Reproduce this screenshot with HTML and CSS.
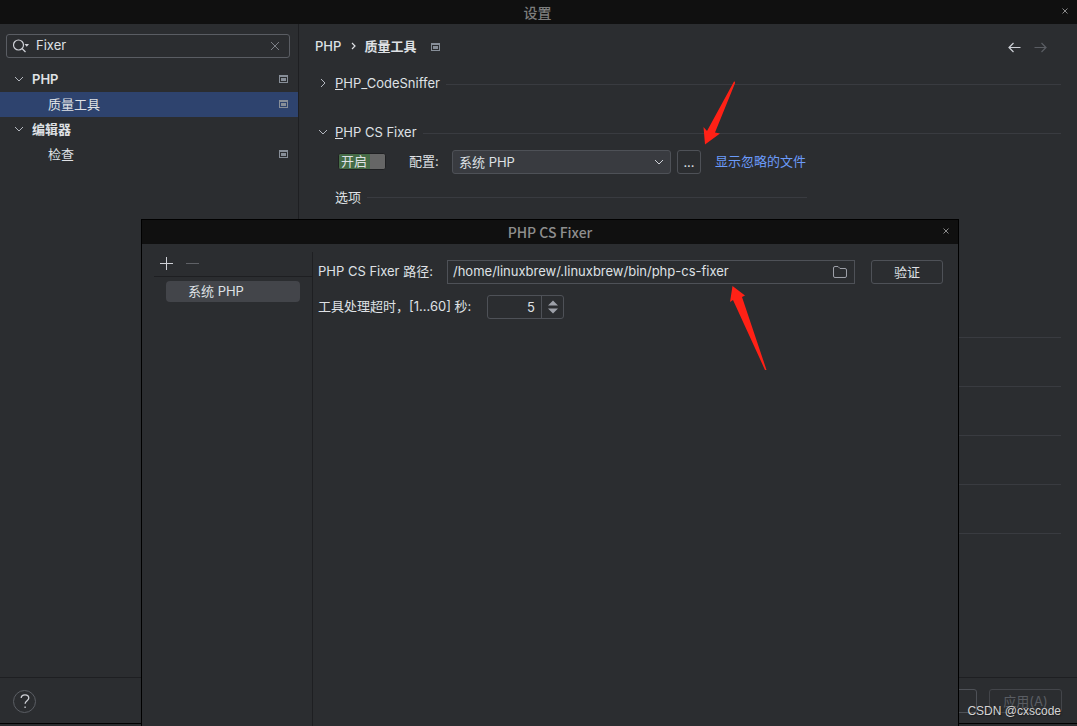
FILE: index.html
```html
<!DOCTYPE html>
<html lang="zh-CN">
<head>
<meta charset="utf-8">
<title>设置</title>
<link rel="stylesheet" href="styles.css">
</head>
<body>
<svg class="defs" aria-hidden="true">
  <symbol id="down" viewBox="0 0 10 10"><path d="M1 3l4 4 4-4" fill="none" stroke="currentColor"/></symbol>
  <symbol id="right" viewBox="0 0 10 10"><path d="M3 1l4 4-4 4" fill="none" stroke="currentColor"/></symbol>
  <symbol id="project" viewBox="0 0 9 8"><path fill-rule="evenodd" d="M0 0h9v8H0zM1 2v5h7V2z" fill="#878e98"/><path d="M2 3h5v3H2z" fill="#878e98"/></symbol>
  <symbol id="close" viewBox="0 0 6 6"><path d="M.5.5l5 5M5.500.5l-5 5" fill="none" stroke="currentColor"/></symbol>
</svg>
<div class="window">
  <header class="titlebar"><h1 class="title">设置</h1><button class="close" aria-label="关闭"><svg width="6" height="6"><use href="#close"/></svg></button></header>
  <div class="body">
    <aside class="sidebar">
      <div class="search">
        <svg width="18" height="16" viewBox="0 0 18 16" fill="none" stroke="#ced0d6" stroke-width="1.200"><circle cx="5.500" cy="7" r="5"/><path d="M9 10.500l3.500 3.500"/><path d="M11.500 6h4.500l-2.250 2.750z" fill="#ced0d6" stroke="none"/></svg>
        <input class="search-input" type="text" value="Fixer" aria-label="搜索">
        <button class="plain dim" aria-label="清除"><svg width="8" height="8" viewBox="0 0 8 8"><path d="M0 0l8 8M8 0L0 8" stroke="currentColor"/></svg></button>
      </div>
      <nav class="tree">
        <a class="row group" href="#php"><svg class="arrow"><use href="#down"/></svg><span>PHP</span><svg class="project"><use href="#project"/></svg></a>
        <a class="row child selected" href="#quality"><span>质量工具</span><svg class="project"><use href="#project"/></svg></a>
        <a class="row group" href="#editor"><svg class="arrow"><use href="#down"/></svg><span>编辑器</span></a>
        <a class="row child" href="#inspections"><span>检查</span><svg class="project"><use href="#project"/></svg></a>
      </nav>
    </aside>
    <main class="main">
      <div class="crumbs">
        <span class="crumb">PHP</span>
        <svg width="5" height="8" viewBox="0 0 5 8"><path d="M1 1l3 3-3 3" fill="none" stroke="#dfe1e5" stroke-width="1.200"/></svg>
        <strong class="crumb-current">质量工具</strong>
        <svg class="project"><use href="#project"/></svg>
        <div class="history">
          <button class="plain" aria-label="后退"><svg width="13" height="11" viewBox="0 0 13 11" fill="none" stroke="#ced0d6" stroke-width="1.200"><path d="M12.500 5.500H1M5.500 1L1 5.500 5.500 10"/></svg></button>
          <button class="plain" aria-label="前进" disabled><svg width="13" height="11" viewBox="0 0 13 11" fill="none" stroke="#5a5d63" stroke-width="1.200"><path d="M.5 5.500H12M7.500 1L12 5.500 7.500 10"/></svg></button>
        </div>
      </div>
      <h2 class="section"><svg class="arrow"><use href="#right"/></svg><span><u class="key">P</u>HP_CodeSniffer</span><i class="rule"></i></h2>
      <h2 class="section"><svg class="arrow"><use href="#down"/></svg><span><u class="key">P</u>HP CS Fixer</span><i class="rule"></i></h2>
      <div class="config">
        <button class="switch" role="switch" aria-checked="true"><span class="on">开启</span><span class="knob"></span></button>
        <label class="config-label" for="config">配置:</label>
        <div class="select-box"><select class="select" id="config"><option>系统 PHP</option></select><svg class="select-arrow"><use href="#down"/></svg></div>
        <button class="button more">...</button>
        <a class="link" href="#ignored">显示忽略的文件</a>
      </div>
      <h3 class="options">选项<i class="rule"></i></h3>
      <div class="more-sections"><i class="rule"></i><i class="rule"></i><i class="rule"></i><i class="rule"></i><i class="rule"></i></div>
    </main>
  </div>
  <footer class="footer">
    <button class="help" aria-label="帮助"><svg width="10" height="15" viewBox="0 0 10 15" fill="none" stroke="#ced0d6" stroke-width="1.300"><path d="M1.200 4C1.200 2 2.800 .8 5 .8s3.800 1.200 3.800 3.200c0 2.600-3.700 2.800-3.700 5.800"/><path d="M5.100 12.500v1.500"/></svg></button>
    <button class="button footer-button" aria-label="取消"></button>
    <button class="button footer-button disabled" disabled>应用(A)</button>
  </footer>
</div>

<section class="dialog" role="dialog" aria-labelledby="dialog-title">
  <header class="titlebar"><h2 class="title latin" id="dialog-title">PHP CS Fixer</h2><button class="close" aria-label="关闭"><svg width="6" height="6"><use href="#close"/></svg></button></header>
  <div class="dialog-body">
    <div class="list">
      <div class="tools">
        <button class="plain" aria-label="添加"><svg width="13" height="13" viewBox="0 0 13 13"><path d="M0 6.500h13M6.500 0v13" stroke="#ced0d6"/></svg></button>
        <button class="plain" aria-label="移除" disabled><svg width="13" height="13" viewBox="0 0 13 13"><path d="M0 6.500h13" stroke="#5f6166"/></svg></button>
      </div>
      <button class="list-item">系统 PHP</button>
    </div>
    <form class="form">
      <div class="field">
        <label class="path-label" for="path">PHP CS Fixer 路径:</label>
        <div class="path-box"><input class="path" id="path" type="text" value="/home/linuxbrew/.linuxbrew/bin/php-cs-fixer"><button class="plain" type="button" aria-label="浏览"><svg width="14" height="12" viewBox="0 0 14 12"><path d="M.5 10V2Q.5.5 2 .5h3l2 2h5q1.500 0 1.500 1.500v6q0 1.500-1.500 1.500H2Q.5 11.500.5 10z" fill="none" stroke="#9da0a8"/></svg></button></div>
        <button class="button verify" type="button">验证</button>
      </div>
      <div class="field">
        <label class="timeout-label" for="timeout">工具处理超时，[1...60] 秒:</label>
        <div class="spinner"><input class="number" id="timeout" type="text" inputmode="numeric" value="5"><span class="steps"><svg width="10" height="14" viewBox="0 0 10 14" fill="#9da0a8"><path d="M0 5.500h10L5 .5zM0 8.500h10l-5 5z"/></svg></span></div>
      </div>
    </form>
  </div>
</section>
<svg class="pointer pointer-more" width="32" height="64" viewBox="703 81 32 64" aria-hidden="true"><path d="M734 81.500L707 131 703.500 127 705 144.500 720 133.500 715 132.500 735.500 82z" fill="#ff2116"/></svg>
<svg class="pointer pointer-path" width="37" height="85" viewBox="730 286 37 85" aria-hidden="true"><path d="M732.500 286L745 295.500 742 297 766.500 370 765 370 733 300 730 302z" fill="#ff2116"/></svg>
<div class="watermark">CSDN @cxscode</div>
</body>
</html>
```
FILE: styles.css
```css
* { box-sizing: border-box; }
body {
  margin: 0;
  background: #2b2d30;
  color: #dfe1e5;
  font: 13px/20px Inter, "Noto Sans CJK SC", sans-serif;
  overflow: hidden;
}
button, input, select { font: inherit; color: inherit; margin: 0; padding: 0; }
input, select { outline: 0; }
h1, h2, h3 { margin: 0; font-size: 13px; font-weight: 400; }
a { color: inherit; text-decoration: none; }
svg { flex: none; display: block; }
.defs { position: absolute; width: 0; height: 0; }
.plain { background: none; border: 0; display: flex; align-items: center; }
.dim { color: #7c7f86; }

.window { display: flex; flex-direction: column; height: 100vh; padding-bottom: 2px; }
.titlebar {
  display: grid;
  grid-template-columns: 24px 1fr 24px;
  align-items: center;
  height: 24px;
  flex: none;
  background: #101010;
  color: #7d7d7d;
}
.title { grid-column: 2; padding-right: 2px; text-align: center; font: 500 14px/24px "Noto Sans CJK SC", sans-serif; }
.latin { padding-right: 0; color: #8e8e8e; }
.close { background: none; border: 0; display: flex; justify-content: center; padding-bottom: 2px; color: #8a8a8a; }

.body { display: flex; flex: 1; min-height: 0; }
.sidebar { width: 299px; flex: none; border-right: 1px solid #1e1f22; padding-top: 10px; }
.search {
  display: flex;
  align-items: center;
  height: 24px;
  margin: 0 8px 9px 6px;
  padding: 0 10px 0 6px;
  border: 1px solid #5a5d63;
  border-radius: 3px;
}
.search-input { flex: 1; min-width: 0; margin-left: 5px; padding-bottom: 2px; background: none; border: 0; }
.row { display: flex; align-items: center; height: 25px; padding: 0 10px 2px 14px; }
.row .project { margin-left: auto; }
.group { font-weight: 600; gap: 8px; }
.child { padding-left: 48px; }
.selected { background: #2e436e; }
.arrow { width: 10px; height: 10px; color: #b4b8bf; }
.project { width: 9px; height: 8px; }

.main { flex: 1; min-width: 0; padding: 0 16px; }
.crumbs { display: flex; align-items: center; height: 46px; padding-bottom: 2px; font-weight: 500; }
.crumbs .project { margin-top: 2px; }
.crumb { margin-right: 10px; }
.crumb-current { margin: 0 15px 0 8px; font-weight: 700; }
.history { display: flex; gap: 13px; margin: 2px 14px 0 auto; }
.section { display: flex; align-items: center; height: 25px; margin-bottom: 24px; padding-left: 3px; }
.section .arrow { margin-right: 7px; }
.section .rule { margin-top: 3px; }
.section + .config { margin-top: -18px; }
.key { text-decoration: none; border-bottom: 1px solid #dfe1e5; display: inline-block; line-height: 12px; }
.rule { flex: 1; height: 1px; margin-left: 6px; background: #393b40; }
.config { display: flex; align-items: center; height: 24px; padding: 0 0 0 23px; }
.switch { display: flex; width: 48px; height: 17px; margin-bottom: 1px; border: 1px solid #1f2022; border-radius: 3px; overflow: hidden; background: #666; }
.on { width: 31px; height: 15px; background: #456b46; line-height: 15px; text-align: left; padding-left: 2px; }
.knob { flex: 1; background: #666; }
.config-label { width: 43px; margin-left: 23px; padding-bottom: 2px; }
.select-box { display: grid; align-items: center; width: 219px; }
.select {
  grid-area: 1 / 1;
  appearance: none;
  height: 24px;
  padding: 0 24px 0 6px;
  border: 1px solid #4e5157;
  border-radius: 3px;
  background: #393b40;
}
.select-arrow { grid-area: 1 / 1; justify-self: end; width: 10px; height: 10px; margin-right: 7px; color: #ced0d6; pointer-events: none; }
.button { height: 24px; border: 1px solid #4e5157; border-radius: 3px; background: none; }
.more { width: 24px; margin: 0 14px 0 6px; }
.link { padding-bottom: 2px; color: #6b9bfa; }
.options { display: flex; align-items: center; width: 472px; height: 24px; margin: 11px 0 128px 20px; }
.more-sections { display: flex; flex-direction: column; gap: 48px; }
.more-sections .rule { flex: none; }

.footer {
  display: flex;
  align-items: center;
  height: 47px;
  flex: none;
  gap: 12px;
  padding: 0 15px 0 13px;
  border-top: 1px solid #1e1f22;
  border-bottom: 1px solid #000;
}
.help { display: flex; align-items: center; justify-content: center; width: 23px; height: 23px; margin: 2px auto 0 0; border: 1px solid #5a5d63; border-radius: 50%; background: none; }
.footer-button { width: 73px; }
.disabled { color: #5a5d63; border-color: #43454a; }

.dialog {
  position: absolute;
  inset: 219px 118px 0 141px;
  display: flex;
  flex-direction: column;
  border: 1px solid #000;
  border-bottom: 0;
  background: #2b2d30;
}
.dialog-body { display: flex; flex: 1; padding: 8px 15px 0 12px; }
.list { width: 159px; border-right: 1px solid #1e1f22; }
.tools { display: flex; align-items: center; gap: 13px; height: 25px; padding: 0 6px 2px; border-bottom: 1px solid #1e1f22; }
.list-item { display: block; width: 134px; height: 21px; margin: 4px 0 0 12px; padding: 0 0 2px 22px; border: 0; border-radius: 4px; background: #43454a; text-align: left; }
.form { display: flex; flex: 1; min-width: 0; flex-direction: column; gap: 11px; padding: 8px 0 0 5px; }
.field { display: flex; align-items: center; height: 24px; }
.path-label { width: 129px; flex: none; padding-bottom: 2px; }
.path-box { display: flex; align-items: center; flex: 1; min-width: 0; height: 24px; padding: 0 7px 0 5px; border: 1px solid #4e5157; }
.path { flex: 1; min-width: 0; padding-bottom: 2px; border: 0; background: none; }
.verify { width: 72px; margin-left: 16px; }
.timeout-label { width: 169px; flex: none; padding-bottom: 2px; }
.spinner { display: flex; width: 77px; height: 24px; border: 1px solid #4e5157; border-radius: 3px; }
.number { flex: 1; min-width: 0; padding-right: 6px; border: 0; background: none; text-align: right; }
.steps { display: flex; align-items: center; justify-content: center; width: 22px; border-left: 1px solid #4e5157; }

.pointer { position: absolute; }
.pointer-more { left: 703px; top: 81px; }
.pointer-path { left: 730px; top: 286px; }
.watermark { position: absolute; right: 16px; bottom: 6px; font: 12px/18px "Liberation Sans", sans-serif; color: #d4d4d4; text-shadow: 1px 1px 1px #1e1f22; }
```
